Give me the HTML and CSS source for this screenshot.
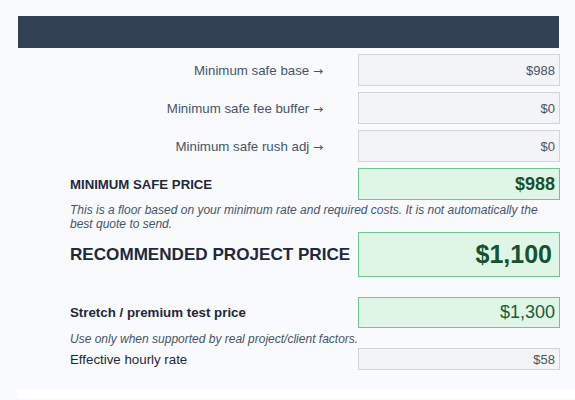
FILE: index.html
```html
<!DOCTYPE html>
<html lang="en">
<head>
  <meta charset="UTF-8">
  <meta name="viewport" content="width=device-width, initial-scale=1.0">
  <title>Project Price</title>
  <link rel="stylesheet" href="styles.css">
</head>
<body>

  <div class="panel">
    <div class="panel-head"></div>

    <div class="row">
      <div class="label label-right">Minimum safe base <span class="arrow">→</span></div>
      <div class="value">$988</div>
    </div>
    <div class="row">
      <div class="label label-right">Minimum safe fee buffer <span class="arrow">→</span></div>
      <div class="value">$0</div>
    </div>
    <div class="row">
      <div class="label label-right">Minimum safe rush adj <span class="arrow">→</span></div>
      <div class="value">$0</div>
    </div>

    <div class="row">
      <div class="label label-caps">MINIMUM SAFE PRICE</div>
      <div class="value value-green value-min">$988</div>
    </div>
    <p class="note note-first">This is a floor based on your minimum rate and required costs. It is not automatically the best quote to send.</p>

    <div class="row row-big">
      <div class="label label-big">RECOMMENDED PROJECT PRICE</div>
      <div class="value value-green value-big">$1,100</div>
    </div>

    <div class="row row-stretch">
      <div class="label label-bold">Stretch / premium test price</div>
      <div class="value value-green value-stretch">$1,300</div>
    </div>
    <p class="note note-second">Use only when supported by real project/client factors.</p>

    <div class="row row-small">
      <div class="label label-plain">Effective hourly rate</div>
      <div class="value value-small">$58</div>
    </div>
  </div>

  <div class="next-card"></div>

</body>
</html>
```

FILE: styles.css
```css
body {
  margin: 0;
  padding: 16px 0 0 18px;
  background-color: #f8fafc;
  font-family: "Liberation Sans", Arial, sans-serif;
  overflow: hidden;
}

.panel {
  width: 542px;
}

.panel-head {
  height: 32px;
  margin-right: 1px;
  background-color: #334155;
  margin-bottom: 6px;
}

.row {
  display: flex;
  align-items: center;
  margin-bottom: 6px;
}

.label {
  flex: 1;
  color: #1e293b;
  font-size: 13.3px;
}

.label-right {
  text-align: right;
  padding-right: 35px;
  color: #475569;
}

.arrow {
  font-family: "DejaVu Sans", sans-serif;
  font-size: 12px;
}

.label-caps,
.label-big,
.label-bold,
.label-plain {
  padding-left: 52px;
}

.label-caps {
  font-weight: bold;
  font-size: 13.2px;
}

.label-big {
  font-weight: bold;
  font-size: 17.1px;
}

.label-bold {
  font-weight: bold;
  font-size: 13.3px;
}

.value {
  width: 202px;
  height: 32px;
  box-sizing: border-box;
  display: flex;
  align-items: center;
  justify-content: flex-end;
  padding-right: 4px;
  background-color: #f3f4f6;
  border: 1px solid #d1d5db;
  color: #475569;
  font-size: 13px;
}

.value-green {
  background-color: #dff5e6;
  border-color: #6fc68e;
  color: #14532d;
}

.value-min {
  font-size: 18px;
  font-weight: bold;
}

.row-big {
  margin-bottom: 20px;
}

.value-big {
  height: 45px;
  font-size: 25px;
  font-weight: bold;
  padding-right: 7px;
}

.value-stretch {
  height: 31px;
  font-size: 18px;
  color: #1a5c3a;
}

.row-stretch {
  margin-bottom: 0;
}

.value-small {
  height: 22px;
  font-size: 13px;
}

.note {
  margin: 0;
  padding: 0 20px 0 52px;
  font-size: 12px;
  line-height: 14px;
  font-style: italic;
  color: #475569;
}

.note-first {
  margin-top: -3px;
  padding-top: 0;
  padding-bottom: 1px;
}

.note-second {
  padding-top: 4px;
  padding-bottom: 2px;
}

.next-card {
  margin-top: 19px;
  margin-left: -1px;
  height: 10px;
  background-color: #ffffff;
}
```
